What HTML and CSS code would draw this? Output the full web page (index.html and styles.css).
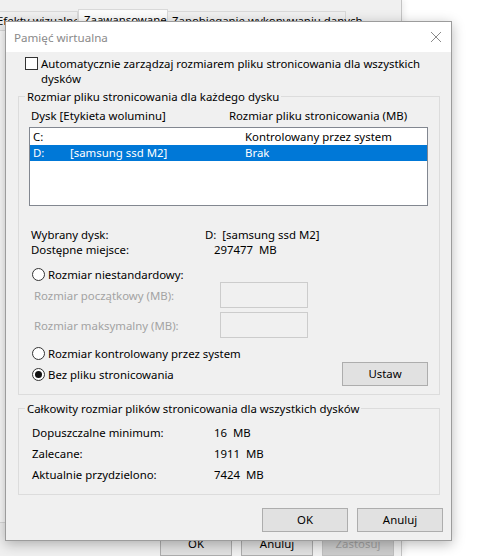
FILE: index.html
```html
<!DOCTYPE html>
<html lang="pl">
<head>
<meta charset="utf-8">
<title>Pamięć wirtualna</title>
<link rel="stylesheet" href="styles.css">
</head>
<body>
<div class="desktop">
  <!-- Performance Options window behind the modal -->
  <div class="parent">
    <div class="tabs">
      <div class="tab t1">Efekty wizualne</div>
      <div class="tab t2 active">Zaawansowane</div>
      <div class="tab t3">Zapobieganie wykonywaniu danych</div>
    </div>
    <div class="pane"></div>
    <div class="parent-buttons">
      <button class="btn pbtn">OK</button>
      <button class="btn pbtn">Anuluj</button>
      <button class="btn pbtn" disabled>Zastosuj</button>
    </div>
  </div>

  <!-- Virtual memory dialog -->
  <div class="dialog">
    <div class="titlebar">
      <span class="title">Pamięć wirtualna</span>
      <svg class="close" width="12" height="12" viewBox="0 0 12 12">
        <path d="M1 1 L11 11 M11 1 L1 11" stroke="#8a8a8a" stroke-width="1" fill="none"/>
      </svg>
    </div>
    <div class="body">
      <label class="check-row">
        <span class="checkbox"></span>
        <span class="check-label">Automatycznie zarządzaj rozmiarem pliku stronicowania dla wszystkich dysków</span>
      </label>

      <fieldset class="group group-drives">
        <legend>Rozmiar pliku stronicowania dla każdego dysku</legend>
        <div class="list-head">
          <span class="col-disk">Dysk [Etykieta woluminu]</span>
          <span class="col-size">Rozmiar pliku stronicowania (MB)</span>
        </div>
        <div class="listbox">
          <div class="lrow"><span class="c-drive">C:</span><span class="c-label"></span><span>Kontrolowany przez system</span></div>
          <div class="lrow selected"><span class="c-drive">D:</span><span class="c-label">[samsung ssd M2]</span><span>Brak</span></div>
        </div>

        <div class="info">
          <span>Wybrany dysk:</span><span class="val">D:&nbsp; [samsung ssd M2]</span>
          <span>Dostępne miejsce:</span><span class="val num">297477&nbsp; MB</span>
        </div>

        <div class="radio-row first"><span class="radio"></span><span>Rozmiar niestandardowy:</span></div>
        <div class="size-rows">
          <div class="size-row"><span class="disabled">Rozmiar początkowy (MB):</span><span class="textbox"></span></div>
          <div class="size-row"><span class="disabled">Rozmiar maksymalny (MB):</span><span class="textbox"></span></div>
        </div>
        <div class="radio-row second"><span class="radio"></span><span>Rozmiar kontrolowany przez system</span></div>
        <div class="set-row">
          <div class="radio-row"><span class="radio checked"></span><span>Bez pliku stronicowania</span></div>
          <button class="btn set">Ustaw</button>
        </div>
      </fieldset>

      <fieldset class="group group-total">
        <legend>Całkowity rozmiar plików stronicowania dla wszystkich dysków</legend>
        <div class="totals">
          <span>Dopuszczalne minimum:</span><span>16&nbsp; MB</span>
          <span>Zalecane:</span><span>1911&nbsp; MB</span>
          <span>Aktualnie przydzielono:</span><span>7424&nbsp; MB</span>
        </div>
      </fieldset>

      <div class="actions">
        <button class="btn act">OK</button>
        <button class="btn act">Anuluj</button>
      </div>
    </div>
  </div>
</div>
</body>
</html>
```

FILE: styles.css
```css
* { box-sizing: border-box; }

html, body {
  margin: 0;
  padding: 0;
  background: #ffffff;
}

body {
  font-family: "Noto Sans", "Open Sans", sans-serif;
  font-size: 11.4px;
  line-height: 15px;
  color: #000;
}

.desktop {
  position: relative;
  width: 487px;
  height: 556px;
  overflow: hidden;
}

/* ---------- background window ---------- */
.parent {
  width: 402px;
  height: 556px;
  background: #f0f0f0;
  border-right: 1px solid #c4c4c4;
  box-shadow: 2px 0 6px rgba(0, 0, 0, 0.08);
  display: flex;
  flex-direction: column;
}

.tabs {
  display: flex;
  align-items: flex-end;
  padding-top: 9px;
  height: 30px;
}

.tab {
  height: 19px;
  padding: 1px 0 0 4px;
  border: 1px solid #d9d9d9;
  border-bottom: none;
  border-left: none;
  background: #f0f0f0;
  line-height: 15px;
  white-space: nowrap;
  color: #000;
  flex: none;
}

.t1 { width: 78px; padding-left: 0; text-indent: -3px; overflow: hidden; }
.t2 { width: 90px; }
.t3 { width: 178px; }

.tab.active {
  height: 21px;
  background: #fcfcfc;
  padding: 2px 0 0 5px;
  border-left: 1px solid #d9d9d9;
}

.pane {
  height: 503px;
  background: #fafafa;
  border: 1px solid #d9d9d9;
  margin-left: -1px;
}

.parent-buttons {
  display: flex;
  gap: 9px;
  padding: 9px 0 0 160px;
}

.btn {
  font: inherit;
  color: #000;
  background: #e1e1e1;
  border: 1px solid #adadad;
  padding: 0;
  margin: 0;
}

.pbtn {
  width: 72px;
  height: 24px;
  line-height: 20px;
}

.pbtn:disabled {
  background: #cccccc;
  border-color: #bfbfbf;
  color: #a0a0a0;
}

/* ---------- modal dialog ---------- */
.dialog {
  position: absolute;
  left: 5px;
  top: 21px;
  width: 447px;
  height: 520px;
  border: 1px solid #9c9c9c;
  background: #f0f0f0;
  box-shadow: 0 3px 12px rgba(0, 0, 0, 0.28);
  display: flex;
  flex-direction: column;
}

.titlebar {
  height: 30px;
  background: #ffffff;
  display: flex;
  align-items: center;
  justify-content: space-between;
  padding: 0 8px 0 8px;
  flex: none;
}

.title {
  color: #8a8a8a;
  font-size: 11.6px;
}

.close {
  margin-right: 1px;
}

.body {
  flex: 1;
  padding: 4px 11px 0 12px;
  display: flex;
  flex-direction: column;
}

.check-row {
  display: flex;
  align-items: flex-start;
  padding-left: 7px;
  gap: 3px;
}

.checkbox {
  flex: none;
  width: 13px;
  height: 13px;
  margin-top: 1px;
  border: 1px solid #333;
  background: #fff;
}

.check-label {
  width: 385px;
}

/* group boxes */
.group {
  margin: 0;
  padding: 0 11px 0 12px;
  border: 1px solid #dcdcdc;
  min-inline-size: 0;
}

.group legend {
  padding: 0 2px;
  margin-left: -6px;
  line-height: 15px;
}

.group-drives {
  margin-top: 3px;
  padding-bottom: 8px;
}

.list-head {
  display: flex;
  margin-top: 4px;
}

.col-disk {
  width: 198px;
}

.listbox {
  margin: 4px 0 0 -2px;
  width: 399px;
  height: 79px;
  background: #fff;
  border: 1px solid #828790;
  padding-top: 1px;
}

.lrow {
  display: flex;
  height: 16px;
  line-height: 16px;
  padding-left: 3px;
}

.lrow.selected {
  background: #0078d7;
  color: #fff;
}

.c-drive { width: 37px; }
.c-label { width: 175px; }

.info {
  display: grid;
  grid-template-columns: 174px auto;
  margin-top: 21px;
}

.info .num {
  padding-left: 9px;
}

.radio-row {
  display: flex;
  align-items: center;
  gap: 3px;
  margin-left: 1px;
}

.radio-row.first { margin-top: 10px; }
.radio-row.second { margin-top: 8px; }

.radio {
  flex: none;
  width: 13px;
  height: 13px;
  border: 1px solid #333;
  border-radius: 50%;
  background: #fff;
  display: flex;
  align-items: center;
  justify-content: center;
}

.radio.checked::after {
  content: "";
  width: 7px;
  height: 7px;
  border-radius: 50%;
  background: #111;
}

.size-rows {
  display: flex;
  flex-direction: column;
  gap: 4px;
}

.size-row {
  display: flex;
  align-items: center;
  height: 26px;
  padding-left: 3px;
}

.disabled {
  color: #a3a3a3;
  width: 186px;
}

.textbox {
  width: 88px;
  height: 26px;
  border: 1px solid #cccccc;
  background: #f0f0f0;
}

.set-row {
  display: flex;
  align-items: center;
  justify-content: space-between;
  margin-top: 1px;
}

.set {
  width: 86px;
  height: 24px;
  line-height: 20px;
}

.group-total {
  margin-top: 6px;
  padding-bottom: 9px;
}

.totals {
  display: grid;
  grid-template-columns: 182px auto;
  grid-auto-rows: 21px;
  align-items: center;
  margin-top: 6px;
  padding-left: 1px;
}

.actions {
  display: flex;
  justify-content: flex-end;
  gap: 9px;
  margin-top: 13px;
  margin-right: -3px;
}

.act {
  width: 86px;
  height: 24px;
  line-height: 20px;
}
```
